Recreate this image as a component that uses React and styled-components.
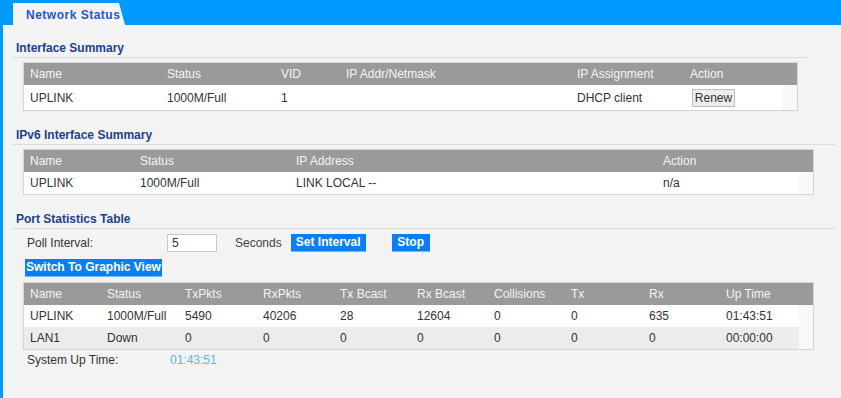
import React from "react";
import styled, { createGlobalStyle } from "styled-components";

const Global = createGlobalStyle`
  html, body { margin: 0; padding: 0; background: #f3f3f3; }
  body { font-family: "Liberation Sans", Arial, sans-serif; font-size: 12px; color: #333; }
  * { box-sizing: border-box; }
`;

const Page = styled.div`
  display: flex;
  flex-direction: column;
  min-height: 100vh;
`;

const TopBar = styled.div`
  height: 25px;
  background: #0099ff;
  display: flex;
  align-items: flex-end;
  padding-left: 13px;
`;

const Tab = styled.div`
  height: 22px;
  width: 112px;
  background: #f4f4f4;
  clip-path: polygon(0 0, 106px 0, 112px 100%, 0 100%);
  color: #2456d0;
  font-weight: bold;
  font-size: 12px;
  letter-spacing: 0.5px;
  display: flex;
  align-items: center;
  padding-left: 13px;
  padding-top: 1px;
`;

const Body = styled.div`
  flex: 1;
  border-left: 3px solid #0099ff;
  padding: 13px 0 20px 9px;
  display: flex;
  flex-direction: column;
`;

const SectionTitle = styled.div`
  width: ${(p) => p.$w}px;
  height: 20px;
  padding-left: 4px;
  border-bottom: 1px solid #dcdcdc;
  color: #1e3f8f;
  font-weight: bold;
  font-size: 12px;
  display: flex;
  align-items: center;
  margin-top: ${(p) => p.$mt || 0}px;
`;

const Table = styled.div`
  margin: ${(p) => p.$mt}px 0 0 11px;
  width: ${(p) => p.$w}px;
  border: 1px solid #d4d4d0;
  background: #f8f8f8;
  display: flex;
  flex-direction: column;
`;

const HeadRow = styled.div`
  display: grid;
  grid-template-columns: ${(p) => p.$cols};
  height: 22px;
  align-items: center;
  padding-left: 6px;
  background: #9a9a9a;
  color: #f4f4f4;
`;

const Row = styled.div`
  display: grid;
  grid-template-columns: ${(p) => p.$cols};
  height: ${(p) => p.$h || 22}px;
  align-items: center;
  padding-left: 6px;
  margin-right: 14px;
  background: ${(p) => (p.$alt ? "#ececec" : "#ffffff")};
  color: #333;
`;

const Cell = styled.div`
  white-space: nowrap;
`;

const RenewButton = styled.button`
  margin-left: 2px;
  width: 43px;
  height: 18px;
  padding: 0;
  border: 1px solid #bdbdbd;
  background: #ededed;
  font: inherit;
  font-size: 12px;
  color: #333;
`;

const ControlRow = styled.div`
  display: flex;
  align-items: center;
  margin-top: 4px;
  padding-left: 15px;
  height: 19px;
`;

const Label = styled.span`
  width: 140px;
  color: #333;
`;

const NumInput = styled.div`
  width: 50px;
  height: 18px;
  border: 1px solid #c8c8c8;
  background: #fff;
  padding-left: 4px;
  display: flex;
  align-items: center;
`;

const Unit = styled.span`
  margin-left: 18px;
  color: #444;
`;

const BlueButton = styled.button`
  margin-left: ${(p) => p.$ml || 0}px;
  width: ${(p) => p.$w}px;
  height: 18px;
  padding: 0 0 1px;
  border: none;
  border-bottom: 1px solid #6fb7ff;
  background: #0a7ff5;
  color: #fff;
  font: inherit;
  font-weight: bold;
  font-size: 12px;
`;

const SwitchWrap = styled.div`
  margin: 7px 0 0 13px;
`;

const UpTimeRow = styled.div`
  display: flex;
  align-items: center;
  margin-top: 3px;
  padding-left: 15px;
  height: 14px;
`;

const UpLabel = styled.span`
  width: 143px;
  color: #333;
`;

const UpValue = styled.span`
  color: #5cb3ee;
`;

const cols1 = "137px 114px 65px 231px 113px 1fr";
const cols2 = "110px 156px 367px 1fr";
const cols3 = "77px 78px 78px 77px 77px 77px 77px 78px 77px 1fr";

const portHead = ["Name", "Status", "TxPkts", "RxPkts", "Tx Bcast", "Rx Bcast", "Collisions", "Tx", "Rx", "Up Time"];
const portRows = [
  ["UPLINK", "1000M/Full", "5490", "40206", "28", "12604", "0", "0", "635", "01:43:51"],
  ["LAN1", "Down", "0", "0", "0", "0", "0", "0", "0", "00:00:00"],
];

export default function App() {
  return (
    <Page>
      <Global />
      <TopBar>
        <Tab>Network Status</Tab>
      </TopBar>
      <Body>
        <SectionTitle $w={796}>Interface Summary</SectionTitle>
        <Table $mt={4} $w={775}>
          <HeadRow $cols={cols1}>
            {["Name", "Status", "VID", "IP Addr/Netmask", "IP Assignment", "Action"].map((h) => (
              <Cell key={h}>{h}</Cell>
            ))}
          </HeadRow>
          <Row $cols={cols1} $h={25}>
            <Cell>UPLINK</Cell>
            <Cell>1000M/Full</Cell>
            <Cell>1</Cell>
            <Cell></Cell>
            <Cell>DHCP client</Cell>
            <Cell>
              <RenewButton>Renew</RenewButton>
            </Cell>
          </Row>
        </Table>

        <SectionTitle $w={823} $mt={14}>IPv6 Interface Summary</SectionTitle>
        <Table $mt={4} $w={791}>
          <HeadRow $cols={cols2}>
            {["Name", "Status", "IP Address", "Action"].map((h) => (
              <Cell key={h}>{h}</Cell>
            ))}
          </HeadRow>
          <Row $cols={cols2}>
            <Cell>UPLINK</Cell>
            <Cell>1000M/Full</Cell>
            <Cell>LINK LOCAL --</Cell>
            <Cell>n/a</Cell>
          </Row>
        </Table>

        <SectionTitle $w={823} $mt={14}>Port Statistics Table</SectionTitle>
        <ControlRow>
          <Label>Poll Interval:</Label>
          <NumInput>5</NumInput>
          <Unit>Seconds</Unit>
          <BlueButton $ml={9} $w={75}>Set Interval</BlueButton>
          <BlueButton $ml={26} $w={38}>Stop</BlueButton>
        </ControlRow>
        <SwitchWrap>
          <BlueButton $w={137}>Switch To Graphic View</BlueButton>
        </SwitchWrap>
        <Table $mt={5} $w={791}>
          <HeadRow $cols={cols3}>
            {portHead.map((h) => (
              <Cell key={h}>{h}</Cell>
            ))}
          </HeadRow>
          {portRows.map((r, i) => (
            <Row key={i} $cols={cols3} $alt={i % 2 === 1}>
              {r.map((c, j) => (
                <Cell key={j}>{c}</Cell>
              ))}
            </Row>
          ))}
        </Table>
        <UpTimeRow>
          <UpLabel>System Up Time:</UpLabel>
          <UpValue>01:43:51</UpValue>
        </UpTimeRow>
      </Body>
    </Page>
  );
}
